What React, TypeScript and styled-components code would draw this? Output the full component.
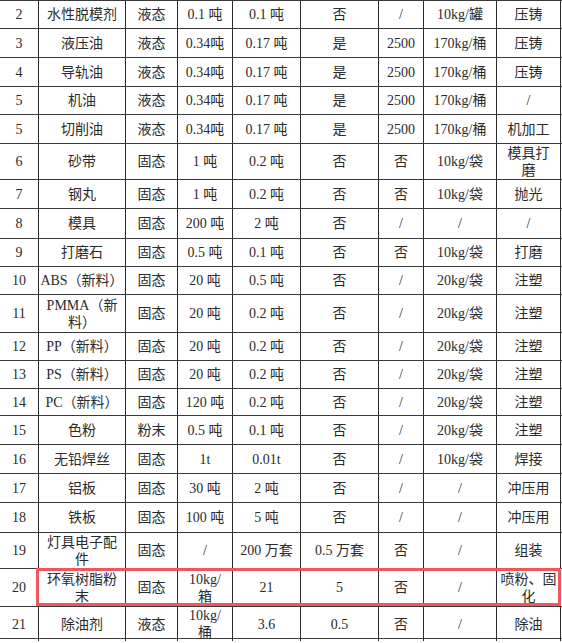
import React from 'react';
import styled, { createGlobalStyle } from 'styled-components';

const GlobalStyle = createGlobalStyle`
  html, body {
    margin: 0;
    padding: 0;
    background: #ffffff;
  }
`;

const COLUMNS = '38px 87px 52px 55px 68px 78px 45px 73px 65px';

const Sheet = styled.div`
  width: 562px;
  height: 643px;
  overflow: hidden;
  background: #ffffff;
  font-family: 'Liberation Serif', 'Noto Sans CJK SC', serif;
  font-size: 14px;
  color: #2b2b2b;
  border-top: 1px solid #3a3a3a;
  box-sizing: border-box;
`;

const Row = styled.div<{ $height: number; $marked?: boolean }>`
  display: grid;
  grid-template-columns: ${COLUMNS};
  height: ${({ $height }) => $height}px;
  box-sizing: border-box;
  border-bottom: 1px solid #3a3a3a;
  position: relative;

  ${({ $marked }) =>
    $marked &&
    `
    &::after {
      content: '';
      position: absolute;
      left: 36px;
      top: -1px;
      width: 525px;
      height: 38px;
      box-sizing: border-box;
      border: 3px solid #f2565c;
      pointer-events: none;
    }
  `}
`;

const Cell = styled.div<{ $first?: boolean; $last?: boolean }>`
  display: flex;
  align-items: center;
  justify-content: center;
  box-sizing: border-box;
  border-left: ${({ $first }) => ($first ? 'none' : '1px solid #2a2a2a')};
  border-right: ${({ $last }) => ($last ? '1px solid #2a2a2a' : 'none')};
`;

const CellText = styled.span`
  display: block;
  text-align: center;
  line-height: 17px;
  white-space: pre;
`;

type Material = {
  height: number;
  cells: string[];
  marked?: boolean;
};

const rows: Material[] = [
  { height: 28, cells: ['2', '水性脱模剂', '液态', '0.1 吨', '0.1 吨', '否', '/', '10kg/罐', '压铸'] },
  { height: 29, cells: ['3', '液压油', '液态', '0.34吨', '0.17 吨', '是', '2500', '170kg/桶', '压铸'] },
  { height: 29, cells: ['4', '导轨油', '液态', '0.34吨', '0.17 吨', '是', '2500', '170kg/桶', '压铸'] },
  { height: 28, cells: ['5', '机油', '液态', '0.34吨', '0.17 吨', '是', '2500', '170kg/桶', '/'] },
  { height: 29, cells: ['5', '切削油', '液态', '0.34吨', '0.17 吨', '是', '2500', '170kg/桶', '机加工'] },
  { height: 36, cells: ['6', '砂带', '固态', '1 吨', '0.2 吨', '否', '否', '10kg/袋', '模具打\n磨'] },
  { height: 29, cells: ['7', '钢丸', '固态', '1 吨', '0.2 吨', '否', '否', '10kg/袋', '抛光'] },
  { height: 30, cells: ['8', '模具', '固态', '200 吨', '2 吨', '否', '/', '/', '/'] },
  { height: 28, cells: ['9', '打磨石', '固态', '0.5 吨', '0.1 吨', '否', '否', '10kg/袋', '打磨'] },
  { height: 28, cells: ['10', 'ABS（新料）', '固态', '20 吨', '0.5 吨', '否', '/', '20kg/袋', '注塑'] },
  { height: 38, cells: ['11', 'PMMA（新\n料）', '固态', '20 吨', '0.2 吨', '否', '/', '20kg/袋', '注塑'] },
  { height: 28, cells: ['12', 'PP（新料）', '固态', '20 吨', '0.2 吨', '否', '/', '20kg/袋', '注塑'] },
  { height: 28, cells: ['13', 'PS（新料）', '固态', '20 吨', '0.2 吨', '否', '/', '20kg/袋', '注塑'] },
  { height: 27, cells: ['14', 'PC（新料）', '固态', '120 吨', '0.2 吨', '否', '/', '20kg/袋', '注塑'] },
  { height: 29, cells: ['15', '色粉', '粉末', '0.5 吨', '0.1 吨', '否', '/', '20kg/袋', '注塑'] },
  { height: 29, cells: ['16', '无铅焊丝', '固态', '1t', '0.01t', '否', '/', '10kg/袋', '焊接'] },
  { height: 29, cells: ['17', '铝板', '固态', '30 吨', '2 吨', '否', '/', '/', '冲压用'] },
  { height: 30, cells: ['18', '铁板', '固态', '100 吨', '5 吨', '否', '/', '/', '冲压用'] },
  { height: 36, cells: ['19', '灯具电子配\n件', '固态', '/', '200 万套', '0.5 万套', '否', '/', '组装'] },
  { height: 38, marked: true, cells: ['20', '环氧树脂粉\n末', '固态', '10kg/\n箱', '21', '5', '否', '/', '喷粉、固\n化'] },
  { height: 32, cells: ['21', '除油剂', '液态', '10kg/\n桶', '3.6', '0.5', '否', '/', '除油'] },
];

export default function App() {
  return (
    <>
      <GlobalStyle />
      <Sheet>
        {rows.map((row, i) => (
          <Row key={i} $height={row.height} $marked={row.marked}>
            {row.cells.map((text, j) => (
              <Cell key={j} $first={j === 0} $last={j === row.cells.length - 1}>
                <CellText>{text}</CellText>
              </Cell>
            ))}
          </Row>
        ))}
      </Sheet>
    </>
  );
}
